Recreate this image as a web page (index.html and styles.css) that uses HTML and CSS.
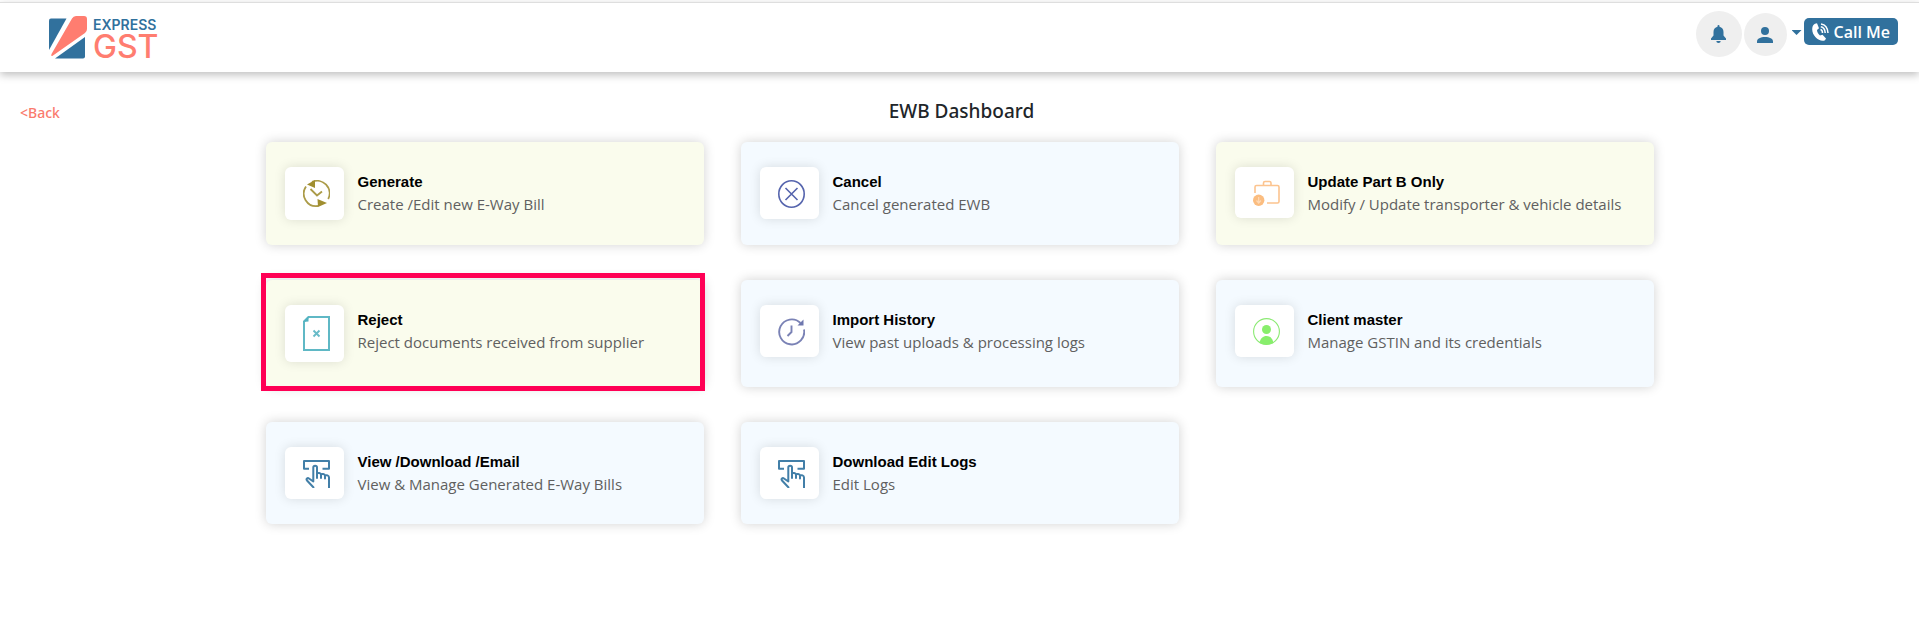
FILE: index.html
```html
<!DOCTYPE html>
<html lang="en">
<head>
<meta charset="utf-8">
<title>EWB Dashboard</title>
<link rel="stylesheet" href="styles.css">
</head>
<body>
<svg class="sprite" aria-hidden="true">
  <symbol id="tap" viewBox="0 0 27 28">
    <g fill="none" stroke="#427fa8" stroke-width="2" stroke-linejoin="round">
      <path d="M6 8.800H1V1H26V8.800H19.500"/>
      <path d="M11 28 4 20.500C2.800 19 4.500 17.500 6 18.500L10.300 21.500V7.500C10.300 5 14 5 14 7.500V18V13.500C15 12.700 17.500 12.800 18 14.500V18V14.500C19 13.700 21.500 13.800 22 15.500V18.500V15.500C23.500 14.900 26 15.200 26 17.500V28"/>
    </g>
  </symbol>
</svg>
<header class="topbar">
  <a class="brand" href="#" aria-label="Express GST">
    <svg class="brand-mark" viewBox="0 0 38 43" aria-hidden="true">
      <path fill="#31719d" d="M2 2.500H17.500L0 34V4.500Q0 2.500 2 2.500Z"/>
      <path fill="#ff7d70" d="M23 2.500Q24.300 0 27 0H35Q38 0 38 3V13Q38 15.500 36 17L4 39.500Q1.500 41 2.500 38Z"/>
      <path fill="#31719d" d="M36 21V40.500Q36 42.500 34 42.500H6Z"/>
    </svg>
    <span class="brand-text">
      <span class="brand-top">EXPRESS</span>
      <span class="brand-bottom">GST</span>
    </span>
  </a>
  <div class="tools">
    <button class="round bell" aria-label="Notifications">
      <svg width="15" height="18" viewBox="0 0 15 18"><path fill="#31719d" d="M7.500 0a1 1 0 0 1 1 1v.7C11 2.200 12.500 4.200 12.500 7v3.500L15 13.500V15H0v-1.500L2.500 10.500V7C2.500 4.200 4 2.200 6.500 1.700V1a1 1 0 0 1 1-1ZM5.300 16H9.700A2.200 2 0 0 1 5.300 16Z"/></svg>
    </button>
    <button class="round user" aria-label="Account">
      <svg width="16" height="16" viewBox="0 0 16 16"><circle cx="8" cy="4" r="4" fill="#31719d"/><path fill="#31719d" d="M0 16v-1.500C0 11.500 3.500 10 8 10s8 1.500 8 4.500V16Z"/></svg>
    </button>
    <button class="caret" aria-label="Account menu"></button>
    <button class="call">
      <svg width="17" height="18" viewBox="0 0 17 18" aria-hidden="true">
        <path fill="#fff" d="M3 .8 5 .2 7 5.200 5 7C5 9 6.300 11 8 12.500L10.500 11.800 14 15.500 13 17.200C8 19.500 0 13.500.2 6 .3 3 1.500 1.500 3 .8Z"/>
        <path fill="none" stroke="#fff" stroke-width="1.500" d="M8.500 6.500Q10.500 7 10.500 10M8.800 3.700Q13 4.500 13.200 10M9 1Q15.500 2 16 10"/>
      </svg>
      Call Me
    </button>
  </div>
</header>
<main class="page">
  <div class="heading">
    <a class="back" href="#">&lt;Back</a>
    <h1>EWB Dashboard</h1>
  </div>
  <div class="cards">
    <a class="card green" href="#">
      <span class="tile"><svg width="27" height="29" viewBox="0 0 27 27" preserveAspectRatio="xMidYMin"><g fill="none" stroke="#ab9b48" stroke-width="1.800"><path d="M3 6.500A12.500 12.500 0 0 0 15 26M9 1.900A12.500 12.500 0 0 1 25.200 19M7.500 9 14 15.500 19 11.500"/></g><path fill="#a08e2f" d="M4 4.500 12 0V8ZM14.500 19 24 23 15 27Z"/></svg></span>
      <span class="text"><strong>Generate</strong><span class="note">Create /Edit new E-Way Bill</span></span>
    </a>
    <a class="card blue" href="#">
      <span class="tile"><svg width="27" height="28" viewBox="0 0 27 28"><g fill="none" stroke="#5564ad" stroke-width="1.600"><ellipse cx="13.500" cy="14" rx="12.700" ry="13.200"/><path d="M7.500 8 19.500 20M19.500 8 7.500 20"/></g></svg></span>
      <span class="text"><strong>Cancel</strong><span class="note">Cancel generated EWB</span></span>
    </a>
    <a class="card green" href="#">
      <span class="tile"><svg width="27" height="27" viewBox="0 0 27 27"><g fill="none" stroke="#fcc48f" stroke-width="1.600"><path d="M2 13V7Q2 5.500 3.500 5.500H24.500Q26 5.500 26 7V21.500Q26 23 24.500 23H14M10.500 5V3Q10.500 1.500 12 1.500H16.500Q18 1.500 18 3V5"/></g><circle cx="5.700" cy="20.300" r="5.700" fill="#fbbd80"/><path d="M5.700 17V23M3.500 20.500 5.700 23 7.900 20.500" fill="none" stroke="#fdd9b6" stroke-width="1.200"/></svg></span>
      <span class="text"><strong>Update Part B Only</strong><span class="note">Modify / Update transporter &amp; vehicle details</span></span>
    </a>
    <a class="card green marked" href="#">
      <span class="tile"><svg width="27" height="35" viewBox="0 0 27 35"><path d="M5.500 1H26V34H1V5.500Z" fill="none" stroke="#5fb8c5" stroke-width="2"/><path d="M0 6 5.500 0V5.500Z" fill="#52b2c0"/><path d="M10.500 14.500 16.500 20.500M16.500 14.500 10.500 20.500" stroke="#68bbc8" stroke-width="1.900"/></svg></span>
      <span class="text"><strong>Reject</strong><span class="note">Reject documents received from supplier</span></span>
    </a>
    <a class="card blue" href="#">
      <span class="tile"><svg width="27" height="28" viewBox="0 0 27 27" preserveAspectRatio="xMidYMin"><g fill="none" stroke="#7a82b5" stroke-width="1.900"><path d="M22.500 5A12.500 12.500 0 1 0 26 11.500M13.500 7.500V14L9.500 18"/></g><path fill="#6e77ae" d="M25.500 1.500V7.500H19.500Z"/></svg></span>
      <span class="text"><strong>Import History</strong><span class="note">View past uploads &amp; processing logs</span></span>
    </a>
    <a class="card blue" href="#">
      <span class="tile"><svg width="27" height="28" viewBox="0 0 27 27" preserveAspectRatio="xMidYMin"><circle cx="13.500" cy="13.500" r="12.900" fill="none" stroke="#8bea73" stroke-width="1.100"/><circle cx="13.500" cy="11.500" r="4.500" fill="#88ee6c"/><path fill="#88ee6c" d="M6.500 25C7.500 20 10 18 13.500 18S19.500 20 20.500 25Q13.500 28.500 6.500 25Z"/></svg></span>
      <span class="text"><strong>Client master</strong><span class="note">Manage GSTIN and its credentials</span></span>
    </a>
    <a class="card blue" href="#">
      <span class="tile"><svg width="27" height="28"><use href="#tap"/></svg></span>
      <span class="text"><strong>View /Download /Email</strong><span class="note">View &amp; Manage Generated E-Way Bills</span></span>
    </a>
    <a class="card blue" href="#">
      <span class="tile"><svg width="27" height="28"><use href="#tap"/></svg></span>
      <span class="text"><strong>Download Edit Logs</strong><span class="note">Edit Logs</span></span>
    </a>
  </div>
</main>
</body>
</html>
```
FILE: styles.css
```css
* { box-sizing: border-box; }
body {
  margin: 0;
  background: #fff;
  color: #212529;
  font-family: "Open Sans", "Noto Sans", sans-serif;
  font-size: 15px;
}
a { color: inherit; text-decoration: none; }
button { border: 0; padding: 0; font: inherit; cursor: pointer; }
.sprite { display: none; }

.topbar {
  display: flex;
  justify-content: space-between;
  height: 70px;
  margin-top: 2px;
  padding: 0 21px 0 49px;
  border-top: 1px solid #dedede;
  box-shadow: 0 3px 8px rgba(0, 0, 0, 0.25);
}
.brand { display: flex; gap: 6px; padding-top: 13px; }
.brand-mark { width: 38px; height: 43px; }
.brand-text { display: flex; flex-direction: column; font-family: Inter, sans-serif; }
.brand-top { color: #31719d; font-size: 14px; font-weight: 600; line-height: 18px; }
.brand-bottom { color: #ff7d70; font-size: 32px; font-weight: 500; line-height: 26px; }

.tools { display: flex; align-items: flex-start; padding-top: 8px; }
.round {
  display: flex;
  align-items: center;
  justify-content: center;
  border-radius: 50%;
  background: #efefef;
}
.bell { width: 46px; height: 46px; }
.user { width: 43px; height: 43px; margin: 2px 5px 0 2px; }
.caret {
  width: 10px;
  height: 5px;
  margin: 19px 2px 0 0;
  background: #31719d;
  clip-path: polygon(0 0, 100% 0, 50% 100%);
}
.call {
  display: flex;
  align-items: center;
  gap: 5px;
  height: 27px;
  margin-top: 7px;
  padding: 0 8px;
  border-radius: 5px;
  background: #31719d;
  color: #fff;
  font-size: 16px;
  font-weight: 600;
}

.heading {
  display: grid;
  grid-template-columns: 1fr auto 1fr;
  align-items: center;
  padding: 24px 16px 0 20px;
  font-family: "Noto Sans", sans-serif;
}
.heading h1 { margin: 0; font-size: 19px; font-weight: 500; line-height: 30px; }
.back { padding-top: 2px; color: #fa7b6e; font-size: 14px; font-weight: 500; }

.cards {
  display: grid;
  grid-template-columns: repeat(3, 1fr);
  gap: 35px 37px;
  width: 100%;
  max-width: 1428px;
  margin: 0 auto;
  padding: 16px 20px 40px;
}
.card {
  position: relative;
  display: flex;
  align-items: flex-start;
  gap: 14px;
  padding: 25px 19px;
  border-radius: 6px;
  box-shadow: 0 0 12px rgba(0, 0, 0, 0.18);
}
.green { background: #fafced; }
.blue { background: #f4faff; }
.tile {
  display: flex;
  padding: 13px 14px 11px 18px;
  border-radius: 6px;
  background: #fff;
  box-shadow: 0 0 12px rgba(0, 0, 0, 0.12);
}
.marked .tile { padding-top: 11px; }
.text { display: flex; flex-direction: column; padding-top: 3px; }
.text strong {
  color: #000;
  font-family: "Liberation Sans", Arial, sans-serif;
  font-size: 15px;
  line-height: 23px;
}
.note { color: #606060; font-size: 15px; line-height: 22px; }
.marked::after {
  content: "";
  position: absolute;
  inset: -7px -1px -4px -5px;
  border: 5px solid #ff0055;
}
```
